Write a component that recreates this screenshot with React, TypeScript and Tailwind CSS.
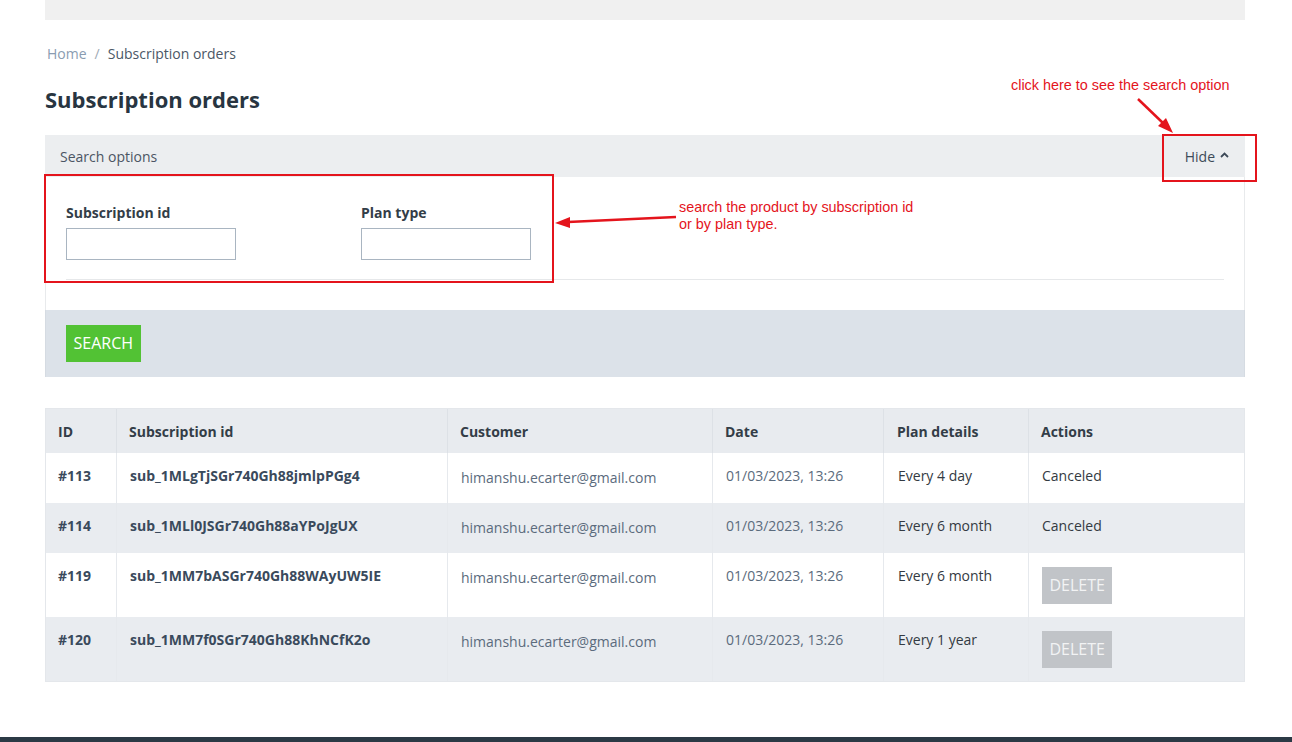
import React from "react";

const rows = [
  { id: "#113", sub: "sub_1MLgTjSGr740Gh88jmlpPGg4", plan: "Every 4 day", action: "Canceled", bg: "bg-white", tall: false },
  { id: "#114", sub: "sub_1MLl0JSGr740Gh88aYPoJgUX", plan: "Every 6 month", action: "Canceled", bg: "bg-[#e9ecf0]", tall: false },
  { id: "#119", sub: "sub_1MM7bASGr740Gh88WAyUW5IE", plan: "Every 6 month", action: "DELETE", bg: "bg-white", tall: true },
  { id: "#120", sub: "sub_1MM7f0SGr740Gh88KhNCfK2o", plan: "Every 1 year", action: "DELETE", bg: "bg-[#e9ecf0]", tall: true },
];

export default function App() {
  return (
    <div className="relative w-[1292px] h-[742px] bg-white overflow-hidden" style={{ fontFamily: '"Open Sans", sans-serif' }}>
      <div className="ml-[45px] w-[1200px] flex flex-col">
        <div className="h-[20px] bg-[#f0f0f0]" />
        <div className="mt-[24px] pl-[2px] flex items-center text-[14px] leading-[20px] h-[20px]">
          <span className="text-[#8a9cb1]">Home</span>
          <span className="text-[#a0aab5] mx-[8px]">/</span>
          <span className="text-[#4b5766]">Subscription orders</span>
        </div>
        <h1 className="mt-[20px] text-[22px] leading-[30px] font-bold text-[#283541]">Subscription orders</h1>
        {/* Search panel */}
        <div className="mt-[21px] flex flex-col">
          <div className="h-[42px] bg-[#eceef0] flex items-center justify-between pl-[15px] pr-[16px] text-[14px] text-[#4b5563]">
            <span>Search options</span>
            <span className="flex items-center gap-[5px] text-[#3d4a58]">
              Hide
              <svg width="9" height="6" viewBox="0 0 9 6" className="mt-[-2px]">
                <path d="M1 5 L4.5 1.5 L8 5" stroke="#3d4a58" strokeWidth="1.8" fill="none" />
              </svg>
            </span>
          </div>
          <div className="border-x border-[#e8eaec] px-[20px] pt-[26px] h-[133px] flex flex-col">
            <div className="flex gap-[125px]">
              <div className="flex flex-col">
                <label className="text-[14px] font-bold text-[#333d47] leading-[20px]">Subscription id</label>
                <div className="mt-[5px] w-[170px] h-[32px] border border-[#a9b5c1]" />
              </div>
              <div className="flex flex-col">
                <label className="text-[14px] font-bold text-[#333d47] leading-[20px]">Plan type</label>
                <div className="mt-[5px] w-[170px] h-[32px] border border-[#a9b5c1]" />
              </div>
            </div>
            <div className="mt-[19px] border-t border-[#e6e8ea]" />
          </div>
          <div className="h-[67px] bg-[#dce2e9] flex items-center pl-[20px] border-x border-[#d5dbe2]">
            <button className="h-[37px] px-[7.5px] bg-[#52c234] text-white text-[16px] leading-[37px]">SEARCH</button>
          </div>
        </div>
        {/* Table */}
        <div className="mt-[31px] border border-[#e4e7eb]">
          <div className="grid grid-cols-[70px_331px_265px_171px_145px_1fr] h-[44px] bg-[#e8ebef] text-[14px] font-bold text-[#333d47]">
            <div className="pl-[12px] flex items-center">ID</div>
            <div className="pl-[12px] flex items-center border-l border-[#dde1e6]">Subscription id</div>
            <div className="pl-[12px] flex items-center border-l border-[#dde1e6]">Customer</div>
            <div className="pl-[12px] flex items-center border-l border-[#dde1e6]">Date</div>
            <div className="pl-[13px] flex items-center border-l border-[#dde1e6]">Plan details</div>
            <div className="pl-[12px] flex items-center border-l border-[#dde1e6]">Actions</div>
          </div>
          {rows.map((r) => (
            <div key={r.id} className={`grid grid-cols-[70px_331px_265px_171px_145px_1fr] text-[14px] leading-[20px] ${r.bg} ${r.tall ? "h-[64px]" : "h-[50px]"}`}>
              <div className="pl-[12px] pt-[13px] font-bold text-[#3a4a5c]">{r.id}</div>
              <div className="pl-[13px] pt-[13px] font-bold text-[#3a4a5c] border-l border-[#e6e9ed]">{r.sub}</div>
              <div className="pl-[13px] pt-[15px] text-[#5b6b7d] border-l border-[#e6e9ed]">himanshu.ecarter@gmail.com</div>
              <div className="pl-[13px] pt-[13px] text-[#5b6b7d] border-l border-[#e6e9ed]">01/03/2023, 13:26</div>
              <div className="pl-[14px] pt-[13px] text-[#333a42] border-l border-[#e6e9ed]">{r.plan}</div>
              <div className="pl-[13px] pt-[13px] text-[#333a42] border-l border-[#e6e9ed]">
                {r.action === "DELETE" ? (
                  <button className="mt-[1px] h-[37px] px-[7.5px] bg-[#c1c4c8] text-[#f2f3f4] text-[16px] leading-[37px]">DELETE</button>
                ) : (
                  r.action
                )}
              </div>
            </div>
          ))}
        </div>
      </div>
      <div className="absolute left-0 bottom-0 w-full h-[5px] bg-[#2b3a45]" />

      {/* Annotations */}
      <div className="absolute left-[44px] top-[174px] w-[510px] h-[109px] border-2 border-[#e4141c]" />
      <div className="absolute left-[1162px] top-[134px] w-[95px] h-[48px] border-2 border-[#e4141c]" />
      <div className="absolute left-[1011px] top-[76px] text-[14.4px] leading-[18px] text-[#e4141c]" style={{ fontFamily: '"Liberation Sans Narrow", "Liberation Sans", sans-serif' }}>
        click here to see the search option
      </div>
      <div className="absolute left-[679px] top-[199px] text-[14.4px] leading-[17px] text-[#e4141c]" style={{ fontFamily: '"Liberation Sans Narrow", "Liberation Sans", sans-serif' }}>
        search the product by subscription id
        <br />
        or by plan type.
      </div>
      <svg className="absolute left-0 top-0 pointer-events-none" width="1292" height="742">
        <line x1="1138" y1="99" x2="1164" y2="124" stroke="#e4141c" strokeWidth="2.5" />
        <polygon points="1173,133 1158,126 1166,118" fill="#e4141c" />
        <line x1="676" y1="217" x2="568" y2="222" stroke="#e4141c" strokeWidth="2.5" />
        <polygon points="555,223 570,217 570,228" fill="#e4141c" />
      </svg>
    </div>
  );
}
